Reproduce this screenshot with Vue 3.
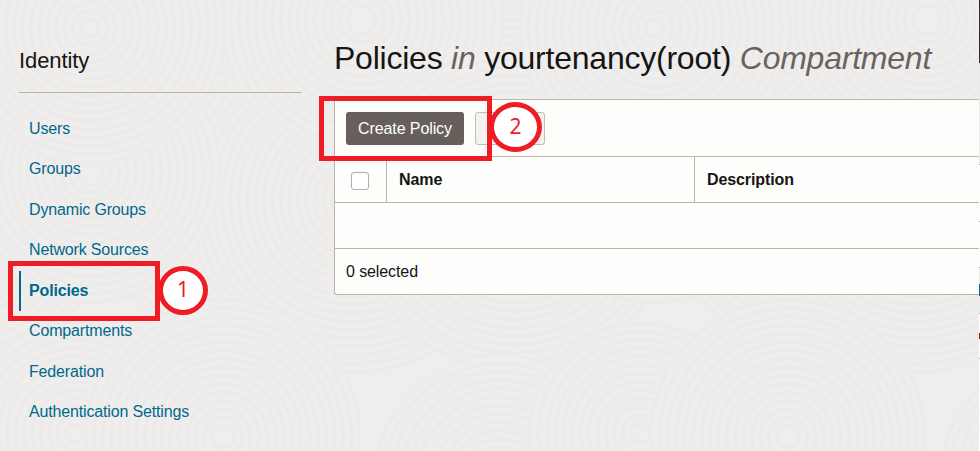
<script setup>
const links = [
  'Users',
  'Groups',
  'Dynamic Groups',
  'Network Sources',
  'Policies',
  'Compartments',
  'Federation',
  'Authentication Settings',
]
const active = 'Policies'
const columns = ['Name', 'Description']

// Overlapping ripple discs, repeated horizontally; later discs cover earlier ones.
const period = 565
const discs = [
  [233, 213, 130], [-50, 210, 160], [510, 60, 150], [222, -40, 130],
  [352, 200, 172], [362, 20, 140], [90, 172, 130], [90, 28, 135],
  [-65, 480, 125], [500, 480, 125], [75, 433, 110], [223, 437, 137],
]
const ripples = [0, 1].flatMap((t) =>
  discs.map(([x, y, r]) => ({
    x: x + t * period,
    y,
    r,
    rings: Array.from({ length: Math.floor(r / 8.4) }, (_, i) => r - i * 8.4),
  }))
)
</script>

<template>
  <div class="page">
    <svg class="ripples" width="980" height="451" viewBox="0 0 980 451" aria-hidden="true">
      <g v-for="(d, i) in ripples" :key="i">
        <circle :cx="d.x" :cy="d.y" :r="d.r" fill="#efeeed" />
        <circle v-for="r in d.rings" :key="r" :cx="d.x" :cy="d.y" :r="r" fill="none" stroke="#ecebea" stroke-width="3" />
      </g>
    </svg>

    <aside class="sidebar">
      <h2>Identity</h2>
      <nav>
        <a v-for="l in links" :key="l" :class="{ active: l === active }">{{ l }}</a>
      </nav>
    </aside>

    <main class="content">
      <h1>Policies <em>in</em> yourtenancy(root) <em>Compartment</em></h1>
      <section class="panel">
        <div class="toolbar">
          <button class="primary">Create Policy</button>
          <button class="secondary"></button>
        </div>
        <div class="row head">
          <div class="check"><span class="box"></span></div>
          <div v-for="c in columns" :key="c" class="cell">{{ c }}</div>
        </div>
        <div class="row"></div>
        <div class="row foot">0 selected</div>
      </section>
    </main>

    <div class="edge">
      <i class="dark"></i><i class="pale"></i><i class="line"></i><i class="gap56"></i>
      <i class="line"></i><i class="gap45"></i><i class="line"></i>
      <i class="tint16"></i><i class="blue"></i><i class="tint17"></i>
      <i class="line"></i><i class="gap19"></i><i class="brown"></i><i class="gap19"></i>
      <i class="line"></i>
    </div>

    <div class="mark mark-one"></div>
    <div class="mark mark-two"></div>
    <div class="badge badge-one">1</div>
    <div class="badge badge-two">2</div>
  </div>
</template>

<style>
body { margin: 0; overflow: hidden; }
</style>

<style scoped>
* { box-sizing: border-box; }
.page {
  position: relative;
  display: flex;
  width: 980px;
  height: 451px;
  overflow: hidden;
  background: #efeeed;
  font: 16px/20px "Liberation Sans", Arial, sans-serif;
  color: #161513;
}
.ripples { position: absolute; inset: 0; }
.sidebar { position: relative; width: 302px; padding: 47px 0 0 19px; }
h2 {
  margin: 0;
  height: 46px;
  font-size: 22px;
  line-height: 27px;
  font-weight: 400;
  letter-spacing: -0.1px;
  border-bottom: 1px solid #b9b4ad;
}
nav { display: flex; flex-direction: column; padding-top: 15.8px; }
nav a {
  display: flex;
  align-items: center;
  height: 40.46px;
  padding-left: 10px;
  letter-spacing: -0.16px;
  color: #00688c;
}
nav a.active { padding-left: 8px; border-left: 2px solid #00688c; font-weight: 700; }
.content { position: relative; width: 645px; flex: none; margin-left: 32px; padding-top: 40px; }
h1 {
  margin: 0;
  height: 59px;
  font-size: 32px;
  line-height: 37px;
  font-weight: 400;
  letter-spacing: -0.23px;
  white-space: nowrap;
}
h1 em { color: #6b625e; }
.panel {
  height: 196px;
  background: #fdfdfb;
  border: 1px solid #b9b4ad;
  border-right: 0;
  border-radius: 3px 0 0 3px;
}
.toolbar {
  display: flex;
  gap: 11px;
  height: 57px;
  padding: 12px 11px;
  border-bottom: 1px solid #b9b4ad;
}
button { height: 33px; padding: 0; border-radius: 3px; font: inherit; letter-spacing: -0.1px; }
.primary { width: 118px; border: 0; background: #665f5b; color: #fff; }
.secondary { width: 70px; border: 1px solid #c2bdb7; background: #f4f2f1; }
.row { height: 46px; border-bottom: 1px solid #b9b4ad; }
.head { display: flex; overflow: hidden; font-weight: 700; letter-spacing: -0.1px; }
.check {
  flex: none;
  width: 51px;
  padding: 15px 0 0 16px;
}
.box {
  display: block;
  width: 18px;
  height: 18px;
  border: 1px solid #b2ada7;
  border-radius: 3px;
  background: #fff;
}
.cell { flex: none; width: 308px; padding: 13px 0 0 12px; border-left: 1px solid #b9b4ad; }
.foot { padding: 13px 11px; border-bottom: 0; letter-spacing: -0.1px; }
.edge { position: relative; width: 1px; background: #fdfdfb; }
.edge i { display: block; }
.dark { height: 63px; background: #312d2a; }
.pale { height: 101px; background: #ebeae9; }
.line { height: 1px; background: #b9b4ad; }
.gap56 { height: 56px; }
.gap45 { height: 45px; }
.tint16 { height: 16px; background: #e5f0f5; }
.blue { height: 12px; background: #1b5e9a; }
.tint17 { height: 17px; background: #e5f0f5; }
.gap19 { height: 19px; }
.brown { height: 6px; background: #70200b; }
.mark { position: absolute; border: 5px solid #ee1c24; }
.mark-one { left: 8px; top: 261px; width: 152px; height: 60px; }
.mark-two { left: 319px; top: 96px; width: 173px; height: 65px; }
.badge {
  position: absolute;
  display: flex;
  justify-content: center;
  border: 5px solid #ee1c24;
  border-radius: 50%;
  background: #fff;
  color: #ee1c24;
  font: 21px/38px "Noto Sans", "Open Sans", sans-serif;
}
.badge-one { left: 158px; top: 266px; width: 50px; height: 49px; line-height: 36px; }
.badge-two { left: 489px; top: 102px; width: 53px; height: 50px; }
</style>
